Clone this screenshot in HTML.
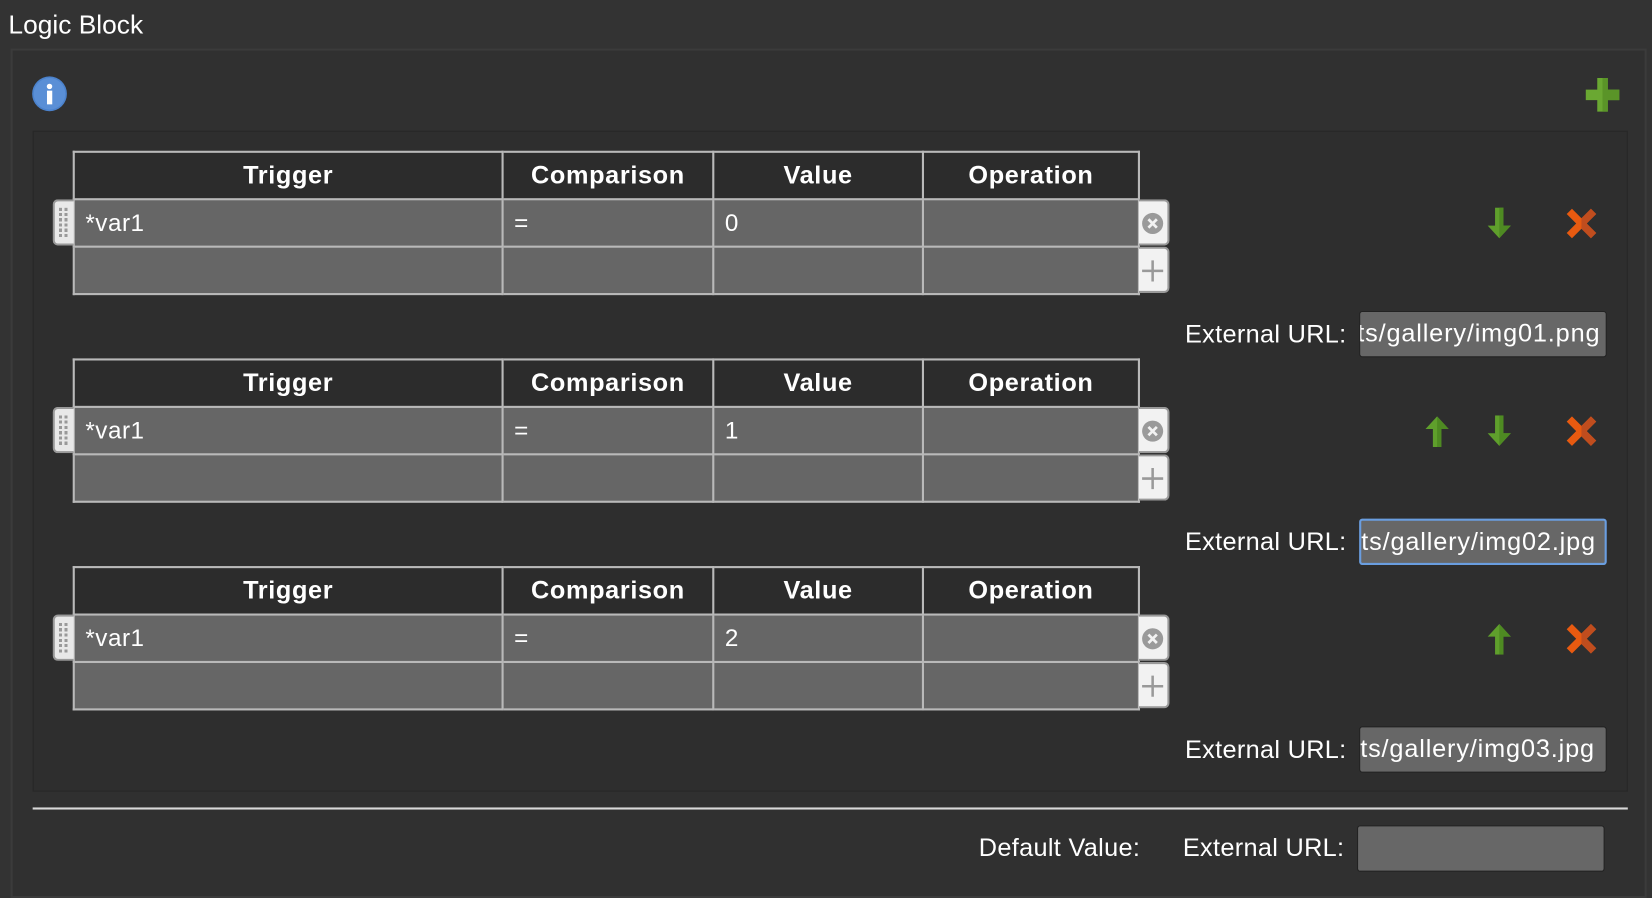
<!DOCTYPE html>
<html><head><meta charset="utf-8"><style>
html,body{margin:0;padding:0;background:#333;overflow:hidden;width:1652px;height:896px}
#s{position:absolute;left:0;top:0;width:1568px;height:850px;transform:scale(1.0536,1.0541);transform-origin:0 0;font-family:"Liberation Sans",sans-serif;color:#fff}
.a{position:absolute}
.title{left:8px;top:10px;font-size:25px}
.outer{left:10px;top:46px;width:1553px;height:806px;border:2px solid #3b3b3b;background:#303030;box-sizing:border-box}
.inner{left:31px;top:124px;width:1514px;height:627px;border:1px solid #272727;background:#2e2e2e;box-sizing:border-box}
table{position:absolute;left:69px;border-collapse:collapse;font-size:23px}
td{border:2px solid #b9b9b9;height:45px;padding:0 0 0 10px;box-sizing:border-box;background:#666;letter-spacing:0.5px}
th{border:2px solid #b9b9b9;height:45px;background:#2c2c2c;font-weight:bold;box-sizing:border-box;font-size:24px;letter-spacing:0.6px}
.h{left:50px;width:20px;height:44px;background:#e8e8e8;border:2px solid #999;border-right:none;border-radius:5px 0 0 5px;box-sizing:border-box}
.h i{position:absolute;left:4px;top:6px;width:9px;height:30px;background:repeating-linear-gradient(#999 0 3px,transparent 3px 5px);-webkit-mask:repeating-linear-gradient(90deg,#000 0 3px,transparent 3px 5px)}
.b{left:1081px;width:29px;height:44px;background:#f2f2f2;border:2px solid #999;border-left:none;border-radius:0 5px 5px 0;box-sizing:border-box}
.lbl{font-size:24px;width:170px;text-align:right;letter-spacing:0.3px}
.inp{width:235px;height:44px;background:#676767;border:1px solid #222;box-sizing:border-box;border-radius:3px;font-size:24px;overflow:hidden;white-space:nowrap;direction:rtl;padding:7px 5px 0 0;text-align:left;letter-spacing:0.8px}
.sep{left:31px;top:766px;width:1514px;height:2px;background:#d8d8d8}
</style></head><body><div id="s">
<div class="a title">Logic Block</div>
<div class="a outer"></div>
<svg class="a" style="left:30px;top:72px" width="35" height="35"><circle cx="17" cy="17" r="16.5" fill="#4b82cc"/><circle cx="17" cy="17" r="15" fill="#5a8fd6"/><circle cx="17" cy="10" r="2.6" fill="#fff"/><rect x="14.6" y="14" width="5" height="13" fill="#fff"/></svg>
<svg class="a" style="left:1505px;top:74px" width="32" height="32"><path d="M11 0h10v11h11v10H21v11H11V21H0V11h11z" fill="#6aa832"/><path d="M16 0h5v11h11v10H21v11h-5z" fill="#5a9428"/></svg>
<div class="a inner"></div>
<div id="blocks"></div>
<div class="a sep"></div>
<div class="a lbl" style="left:929px;top:791px;width:170px;text-align:left">Default Value:</div>
<div class="a lbl" style="left:1106px;top:791px">External URL:</div>
<div class="a inp" style="left:1288px;top:783px"></div>
</div>
<script>
var ys=[143,340,537],vals=["0","1","2"],urls=["ts/gallery/img01.png","ts/gallery/img02.jpg","ts/gallery/img03.jpg"];
var h="";
var down='<svg width="24" height="30"><path d="M8 0h8v17h7L12 29 1 17h7z" fill="#5f9f2c"/><path d="M12 0h4v17h7L12 29z" fill="#4e8a22"/></svg>';
var up='<svg width="24" height="30"><path d="M8 30h8V13h7L12 1 1 13h7z" fill="#5f9f2c"/><path d="M12 30h4V13h7L12 1z" fill="#4e8a22"/></svg>';
var x='<svg width="34" height="34"><path d="M3 8l5-5 9 9 9-9 5 5-9 9 9 9-5 5-9-9-9 9-5-5 9-9z" fill="#e85a10"/><path d="M17 12l9-9 5 5-9 9 9 9-5 5-9-9z" fill="#c04d1e"/></svg>';
for(var i=0;i<3;i++){var y=ys[i];
h+='<table style="top:'+y+'px"><tr><th style="width:407px">Trigger</th><th style="width:200px">Comparison</th><th style="width:199px">Value</th><th style="width:205px">Operation</th></tr>'+
'<tr><td>*var1</td><td>=</td><td>'+vals[i]+'</td><td></td></tr><tr><td></td><td></td><td></td><td></td></tr></table>';
h+='<div class="a h" style="top:'+(y+46)+'px"><i></i></div>';
h+='<div class="a b" style="top:'+(y+46)+'px"><svg width="27" height="40"><circle cx="13" cy="21" r="10" fill="#9a9a9a"/><path d="M9 17l8 8M17 17l-8 8" stroke="#f2f2f2" stroke-width="2.6"/></svg></div>';
h+='<div class="a b" style="top:'+(y+91)+'px"><svg width="27" height="40"><path d="M13 11v20M3 21h20" stroke="#999" stroke-width="2.4"/></svg></div>';
var ay=y+54;
if(i==0){h+='<div class="a" style="left:1411px;top:'+ay+'px">'+down+'</div>';}
if(i==1){h+='<div class="a" style="left:1352px;top:'+ay+'px">'+up+'</div><div class="a" style="left:1411px;top:'+ay+'px">'+down+'</div>';}
if(i==2){h+='<div class="a" style="left:1411px;top:'+ay+'px">'+up+'</div>';}
h+='<div class="a" style="left:1484px;top:'+(y+52)+'px">'+x+'</div>';
h+='<div class="a lbl" style="left:1108px;top:'+(y+161)+'px">External URL:</div>';
h+='<div class="a inp" style="left:1290px;top:'+(y+152)+'px;'+(i==1?'border:2px solid #6a9ee0;':'')+'">'+urls[i]+'</div>';
}
document.getElementById('blocks').outerHTML=h;
</script>
</body></html>
